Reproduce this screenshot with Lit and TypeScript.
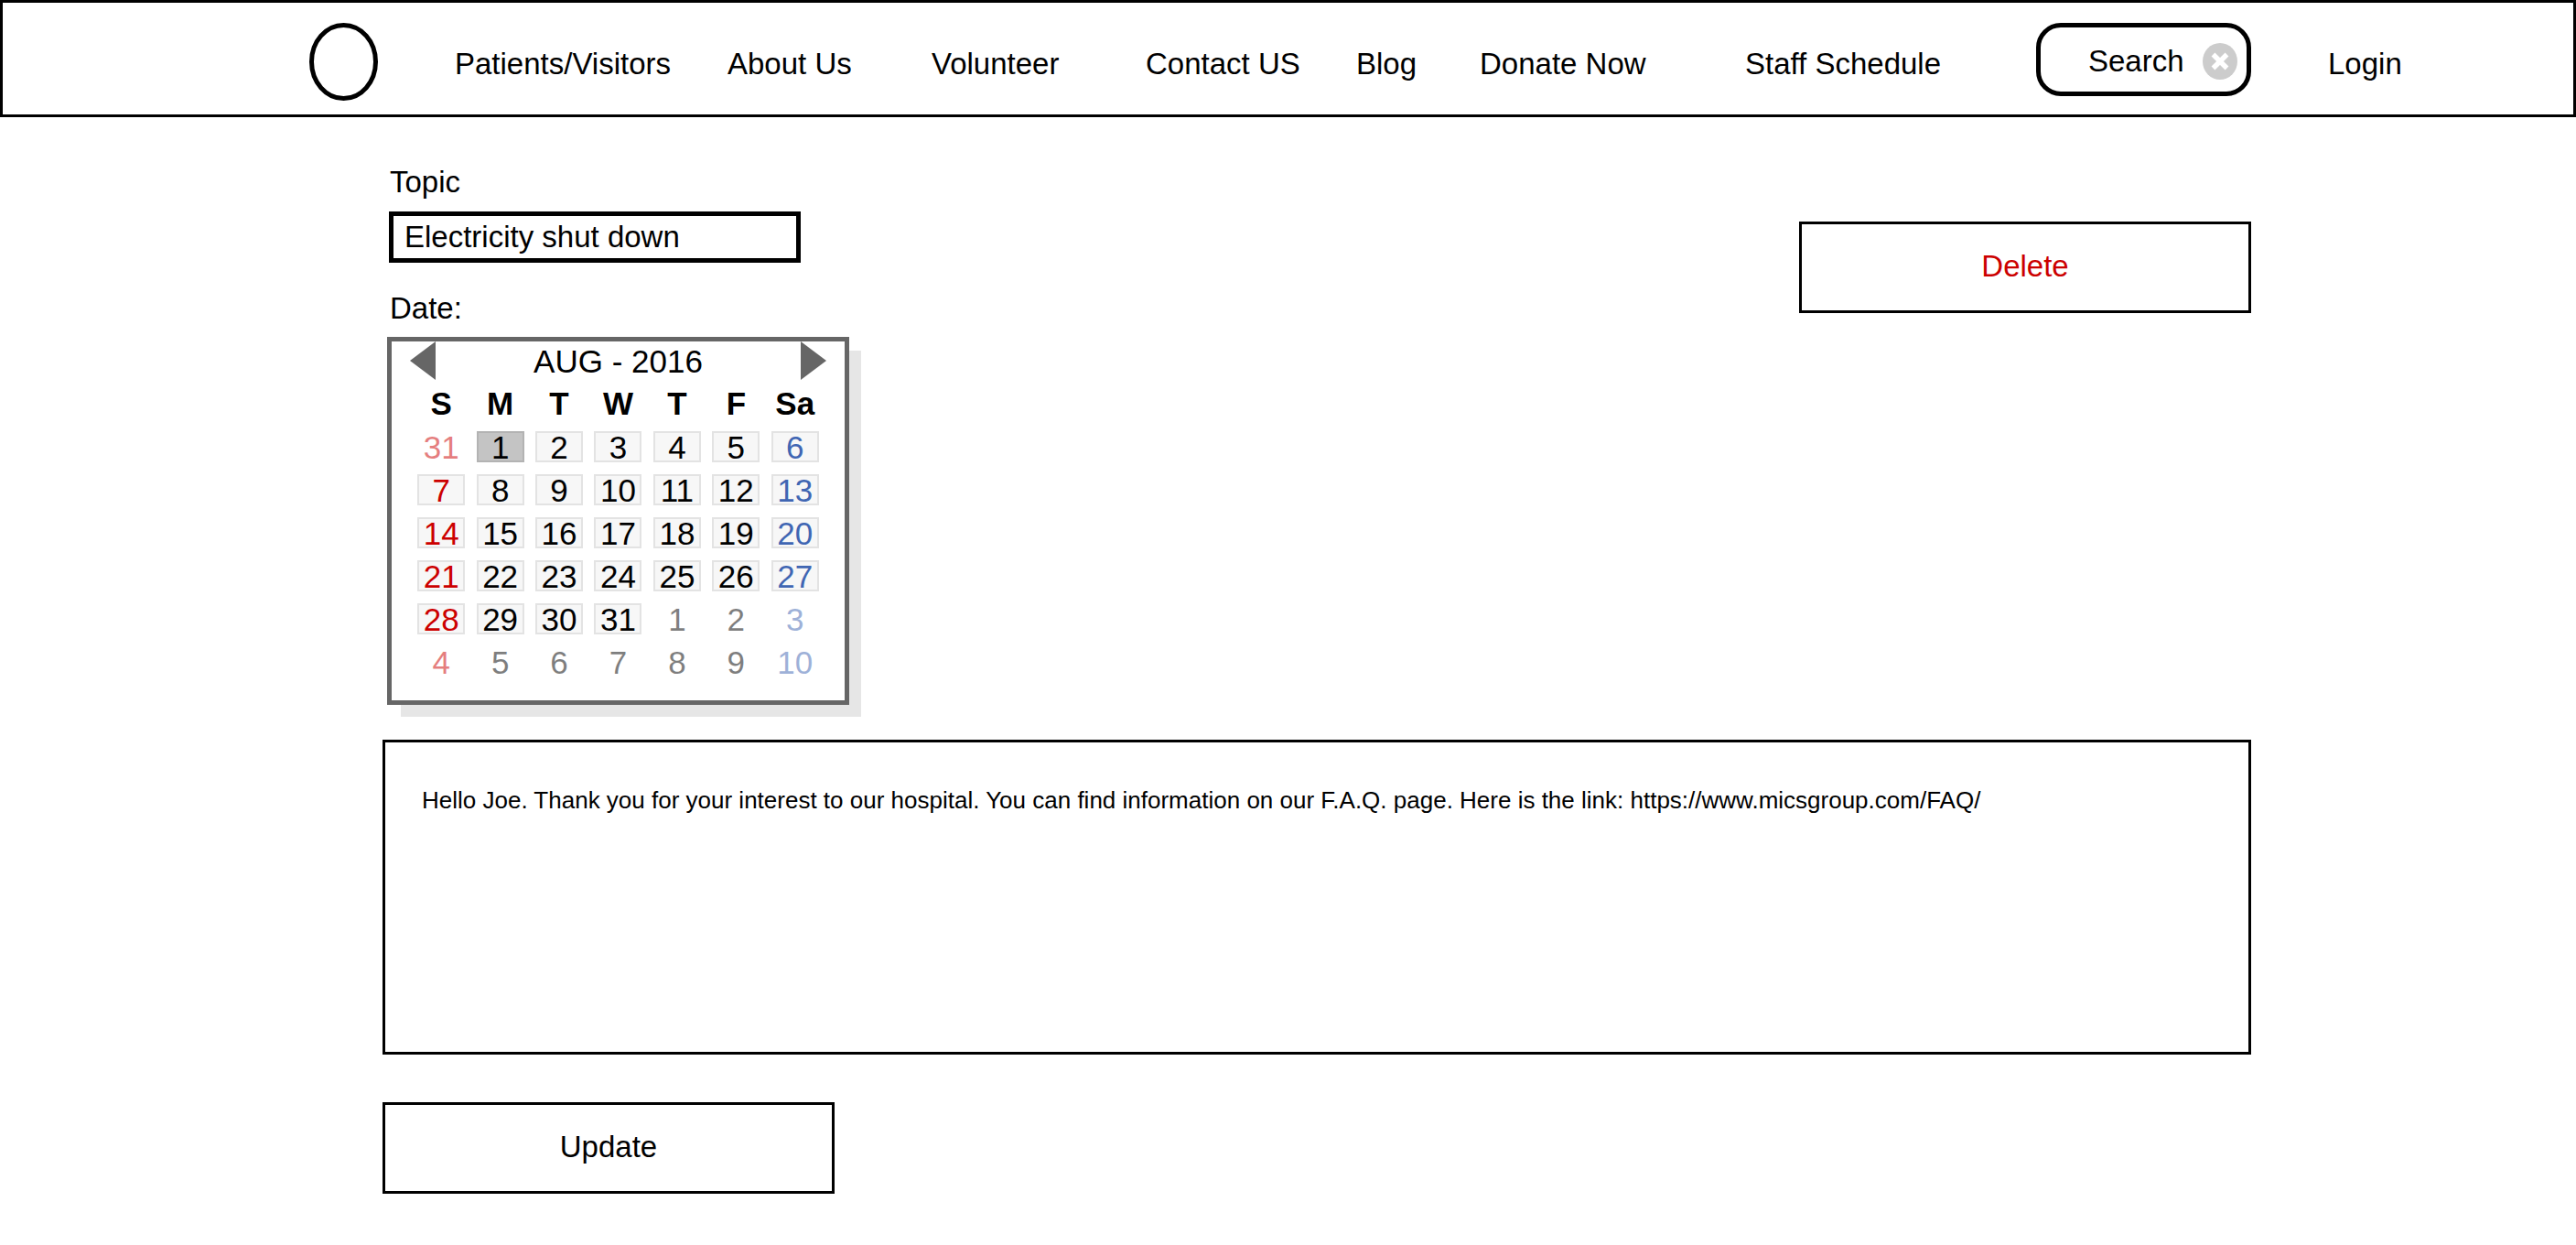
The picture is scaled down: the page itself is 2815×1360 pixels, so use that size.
import { LitElement, html, css } from "lit";
import { customElement, property, state } from "lit/decorators.js";
import { classMap } from "lit/directives/class-map.js";

interface Day {
  label: number;
  weekday: number;
  outside: boolean;
}

const WEEKDAYS = ["S", "M", "T", "W", "T", "F", "Sa"];
const MONTHS = ["JAN", "FEB", "MAR", "APR", "MAY", "JUN", "JUL", "AUG", "SEP", "OCT", "NOV", "DEC"];

@customElement("month-calendar")
export class MonthCalendar extends LitElement {
  @property({ type: Number }) year = 2016;
  @property({ type: Number }) month = 7;
  @state() private selected = 1;

  static styles = css`
    :host {
      display: block;
      box-sizing: border-box;
      width: 505px;
      border: 5px solid #666;
      background: #fff;
      box-shadow: 14px 14px 0 -1px #e6e6e6;
      padding: 0 22px 12px;
      font-size: 35px;
      line-height: 40px;
    }
    .bar {
      display: flex;
      justify-content: space-between;
      align-items: flex-start;
      height: 52px;
      margin: 0 -2px;
    }
    .title {
      padding-top: 2px;
    }
    .step {
      border: 0;
      background: none;
      padding: 0;
      cursor: pointer;
    }
    .arrow {
      display: block;
      width: 28px;
      height: 42px;
      fill: #666;
    }
    .grid {
      width: 100%;
      border-collapse: collapse;
      table-layout: fixed;
    }
    th,
    td {
      padding: 0;
      height: 47px;
      text-align: center;
      vertical-align: top;
    }
    th {
      height: 46px;
      line-height: 32px;
    }
    .day {
      box-sizing: border-box;
      width: 52px;
      height: 34px;
      border: 2px solid #e3e3e3;
      background: #f7f7f7;
      padding: 2px 0 0;
      margin: 0 auto;
      display: flex;
      align-items: center;
      justify-content: center;
      font: inherit;
      line-height: 30px;
      color: #000;
      cursor: pointer;
    }
    .day.sun { color: #c00; }
    .day.sat { color: #4066b3; }
    .day.out {
      border-color: transparent;
      background: none;
      opacity: 0.5;
    }
    .day.on {
      border-color: #b3b3b3;
      background: #c4c4c4;
    }
  `;

  private get weeks(): Day[][] {
    const first = new Date(this.year, this.month, 1).getDay();
    return Array.from({ length: 6 }, (_, w) =>
      Array.from({ length: 7 }, (_, d) => {
        const date = new Date(this.year, this.month, 1 - first + w * 7 + d);
        return { label: date.getDate(), weekday: d, outside: date.getMonth() !== this.month };
      })
    );
  }

  private step(by: number) {
    const next = new Date(this.year, this.month + by, 1);
    this.year = next.getFullYear();
    this.month = next.getMonth();
  }

  render() {
    return html`
      <div class="bar">
        <button class="step" type="button" aria-label="Previous month" @click=${() => this.step(-1)}>
          <svg class="arrow" viewBox="0 0 28 42"><path d="M28 0V42L0 21Z" /></svg>
        </button>
        <span class="title">${MONTHS[this.month]} - ${this.year}</span>
        <button class="step" type="button" aria-label="Next month" @click=${() => this.step(1)}>
          <svg class="arrow" viewBox="0 0 28 42"><path d="M0 0V42L28 21Z" /></svg>
        </button>
      </div>
      <table class="grid">
        <thead>
          <tr>${WEEKDAYS.map((d) => html`<th scope="col">${d}</th>`)}</tr>
        </thead>
        <tbody>
          ${this.weeks.map(
            (week) => html`<tr>
              ${week.map(
                (day) => html`<td>
                  <button
                    type="button"
                    class=${classMap({
                      day: true,
                      sun: day.weekday === 0,
                      sat: day.weekday === 6,
                      out: day.outside,
                      on: !day.outside && day.label === this.selected,
                    })}
                    @click=${() => {
                      if (!day.outside) this.selected = day.label;
                    }}
                  >${day.label}</button>
                </td>`
              )}
            </tr>`
          )}
        </tbody>
      </table>
    `;
  }
}

@customElement("site-header")
export class SiteHeader extends LitElement {
  @state() private query = "Search";

  static styles = css`
    :host {
      display: block;
    }
    /* Column shares set where each item starts along the bar. */
    .bar {
      box-sizing: border-box;
      display: grid;
      grid-template-columns: 335fr 159fr 298fr 223fr 234fr 230fr 135fr 290fr 318fr 319fr 268fr;
      align-items: start;
      height: 128px;
      border: 3px solid #000;
      padding-top: 22px;
      background: #fff;
    }
    .bar > :first-child {
      grid-column-start: 2;
    }
    .logo {
      display: block;
      width: 75px;
      height: 85px;
    }
    .link {
      padding-top: 27px;
      line-height: 36px;
      color: #000;
      text-decoration: none;
      white-space: nowrap;
    }
    .search {
      box-sizing: border-box;
      display: flex;
      align-items: center;
      width: 235px;
      height: 80px;
      border: 5px solid #000;
      border-radius: 27px;
      padding: 4px 10px 0 52px;
      gap: 5px;
    }
    .query {
      flex: 1;
      min-width: 0;
      border: 0;
      outline: 0;
      padding: 0;
      background: none;
      font: inherit;
      line-height: 36px;
      color: #000;
    }
    .clear {
      flex: none;
      border: 0;
      padding: 0;
      background: none;
      cursor: pointer;
    }
    .cross {
      display: block;
      width: 38px;
      height: 40px;
    }
  `;

  render() {
    const link = (label: string) => html`<a class="link" href="#">${label}</a>`;
    return html`
      <nav class="bar">
        <a href="#" aria-label="Home">
          <svg class="logo" viewBox="0 0 75 85">
            <ellipse cx="37.5" cy="42.5" rx="35" ry="40" fill="none" stroke="#000" stroke-width="5" />
          </svg>
        </a>
        ${link("Patients/Visitors")} ${link("About Us")} ${link("Volunteer")} ${link("Contact US")}
        ${link("Blog")} ${link("Donate Now")} ${link("Staff Schedule")}
        <div class="search">
          <input
            class="query"
            type="text"
            aria-label="Search"
            .value=${this.query}
            @input=${(e: Event) => (this.query = (e.target as HTMLInputElement).value)}
          />
          <button class="clear" type="button" aria-label="Clear search" @click=${() => (this.query = "")}>
            <svg class="cross" viewBox="0 0 38 40">
              <ellipse cx="19" cy="20" rx="19" ry="20" fill="#ccc" />
              <path d="M11.500 12.500L26.500 27.500M26.500 12.500L11.500 27.500" stroke="#fff" stroke-width="5.500" />
            </svg>
          </button>
        </div>
        ${link("Login")}
      </nav>
    `;
  }
}

@customElement("app-root")
export class AppRoot extends LitElement {
  static styles = css`
    :host {
      display: block;
      min-height: 100vh;
      background: #fff;
      color: #000;
      font-family: "Liberation Sans", Arial, sans-serif;
      font-size: 33px;
      line-height: 36px;
    }
    .page {
      display: grid;
      grid-template-columns: 418fr 2042fr 355fr;
      padding: 53px 0 56px;
    }
    .form {
      grid-column: 2;
      display: flex;
      flex-direction: column;
      align-items: flex-start;
    }
    .top {
      align-self: stretch;
      display: flex;
      justify-content: space-between;
      align-items: flex-start;
      padding-left: 5px;
    }
    .fields {
      display: flex;
      flex-direction: column;
      align-items: flex-start;
    }
    .label {
      padding-left: 3px;
    }
    .topic {
      box-sizing: border-box;
      width: 450px;
      height: 56px;
      margin: 14px 2px 32px;
      border: 5px solid #000;
      border-radius: 0;
      padding: 0 12px;
      background: #fff;
      font: inherit;
      color: #000;
    }
    .calendar {
      margin-top: 13px;
    }
    .button {
      box-sizing: border-box;
      width: 494px;
      height: 100px;
      border: 3px solid #000;
      padding: 0 0 2px;
      background: #fff;
      font: inherit;
      color: #000;
      cursor: pointer;
    }
    .delete {
      margin-top: 61px;
      color: #c00;
    }
    .message {
      box-sizing: border-box;
      width: 100%;
      height: 344px;
      margin: 38px 0 52px;
      border: 3px solid #000;
      border-radius: 0;
      padding: 48px 40px;
      background: #fff;
      font: inherit;
      font-size: 26px;
      line-height: 30px;
      color: #000;
      resize: none;
    }
  `;

  render() {
    return html`
      <site-header></site-header>
      <main class="page">
        <form class="form" @submit=${(e: Event) => e.preventDefault()}>
          <div class="top">
            <div class="fields">
              <label class="label" for="topic">Topic</label>
              <input class="topic" id="topic" type="text" .value=${"Electricity shut down"} />
              <span class="label">Date:</span>
              <month-calendar class="calendar" role="group" aria-label="Date"></month-calendar>
            </div>
            <button class="button delete" type="button">Delete</button>
          </div>
          <textarea
            class="message"
            aria-label="Message"
            .value=${"Hello Joe. Thank you for your interest to our hospital. You can find information on our F.A.Q. page. Here is the link: https://www.micsgroup.com/FAQ/"}
          ></textarea>
          <button class="button" type="submit">Update</button>
        </form>
      </main>
    `;
  }
}
